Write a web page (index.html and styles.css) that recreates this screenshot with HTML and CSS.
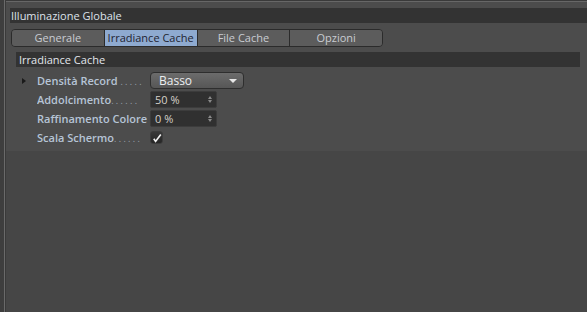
FILE: index.html
```html
<!DOCTYPE html>
<html lang="it">
<head>
  <meta charset="UTF-8">
  <title>Illuminazione Globale</title>
  <link rel="stylesheet" href="styles.css">
</head>
<body>
  <div class="frame">
    <div class="side"></div>
    <div class="main">
      <div class="panel">
        <div class="title">Illuminazione Globale</div>
        <div class="tabs">
          <a href="#" class="tab">Generale</a>
          <a href="#" class="tab active">Irradiance Cache</a>
          <a href="#" class="tab">File Cache</a>
          <a href="#" class="tab">Opzioni</a>
        </div>
        <div class="group">
          <div class="group-title">Irradiance Cache</div>
          <div class="rows">
            <div class="row">
              <span class="arrow"></span>
              <span class="label">Densità Record <span class="dots">. . . . .</span></span>
              <div class="select">Basso<span class="caret"></span></div>
            </div>
            <div class="row">
              <span class="arrow none"></span>
              <span class="label">Addolcimento<span class="dots">. . . . . .</span></span>
              <div class="num">50 %<span class="spin"></span></div>
            </div>
            <div class="row">
              <span class="arrow none"></span>
              <span class="label">Raffinamento Colore</span>
              <div class="num">0 %<span class="spin"></span></div>
            </div>
            <div class="row">
              <span class="arrow none"></span>
              <span class="label">Scala Schermo<span class="dots">. . . . . .</span></span>
              <div class="check">
                <svg width="10" height="10" viewBox="0 0 10 10"><path d="M1.8 5.8 L3.6 8.4 L8.8 1.6" fill="none" stroke="#f2f2f2" stroke-width="1.7"/></svg>
              </div>
            </div>
          </div>
        </div>
      </div>
    </div>
  </div>
</body>
</html>
```

FILE: styles.css
```css
html, body {
  margin: 0;
  height: 100%;
  background: #464646;
  font-family: "Open Sans", "Liberation Sans", sans-serif;
  font-size: 11px;
}

.frame {
  display: flex;
  height: 312px;
}

.side {
  width: 4px;
  background: #3e3e3e;
  border-right: 1px solid #6a6a6a;
}

.main {
  flex: 1;
  border-left: 1px solid #3a3a3a;
  border-top: 1px solid #3a3a3a;
}

.panel {
  background: #4c4c4c;
  border-top: 1px solid #676767;
  padding: 6px 0 4px 4px;
}

.title {
  background: #333;
  color: #dde2ea;
  height: 15px;
  line-height: 15px;
  padding-left: 1px;
}

.tabs {
  display: flex;
  width: 370px;
  margin: 6px 0 0 1px;
  border: 1px solid #2b2b2b;
  border-radius: 4px;
  overflow: hidden;
}

.tabs .tab {
  flex: 1;
  height: 16px;
  line-height: 16px;
  text-align: center;
  text-decoration: none;
  color: #c9ccd2;
  background: #5c5c5c;
  border-left: 1px solid #2b2b2b;
}

.tabs .tab:first-child {
  border-left: none;
}

.tabs .tab.active {
  background: #8eaad0;
  color: #1e2430;
}

.group {
  margin: 5px 7px 0 6px;
}

.group-title {
  background: #333;
  color: #e2e6ec;
  height: 15px;
  line-height: 15px;
  padding-left: 3px;
}

.rows {
  padding: 4px 0 0 0;
}

.row {
  display: flex;
  align-items: center;
  height: 19px;
}

.arrow {
  width: 0;
  height: 0;
  margin: 0 11px 0 6px;
  border-top: 3px solid transparent;
  border-bottom: 3px solid transparent;
  border-left: 4px solid #1a1a1a;
}

.arrow.none {
  border-left-color: transparent;
}

.label {
  width: 113px;
  color: #b6c4d6;
  font-weight: 600;
  white-space: nowrap;
  overflow: hidden;
}

.dots {
  color: #9aa2ad;
  font-size: 9px;
  font-weight: normal;
}

.select {
  position: relative;
  width: 84px;
  height: 15px;
  line-height: 15px;
  padding-left: 8px;
  color: #eceef0;
  font-size: 12px;
  background: linear-gradient(#6c6c6c, #565656);
  border: 1px solid #2e2e2e;
  border-radius: 4px;
}

.caret {
  position: absolute;
  right: 6px;
  top: 6px;
  border-left: 4px solid transparent;
  border-right: 4px solid transparent;
  border-top: 4px solid #e8e8e8;
}

.num {
  position: relative;
  width: 61px;
  height: 15px;
  line-height: 15px;
  padding-left: 4px;
  color: #d6d0ca;
  background: #303030;
  border: 1px solid #3c3c3c;
  border-radius: 2px;
}

.spin::before,
.spin::after {
  content: '';
  position: absolute;
  right: 4px;
  border-left: 2px solid transparent;
  border-right: 2px solid transparent;
}

.spin::before {
  top: 4px;
  border-bottom: 3px solid #8a8a8a;
}

.spin::after {
  top: 8px;
  border-top: 3px solid #8a8a8a;
}

.check {
  width: 11px;
  height: 11px;
  display: flex;
  align-items: center;
  justify-content: center;
  background: linear-gradient(#383838, #262626);
  border: 1px solid #3c3c3c;
  border-radius: 3px;
}
```
